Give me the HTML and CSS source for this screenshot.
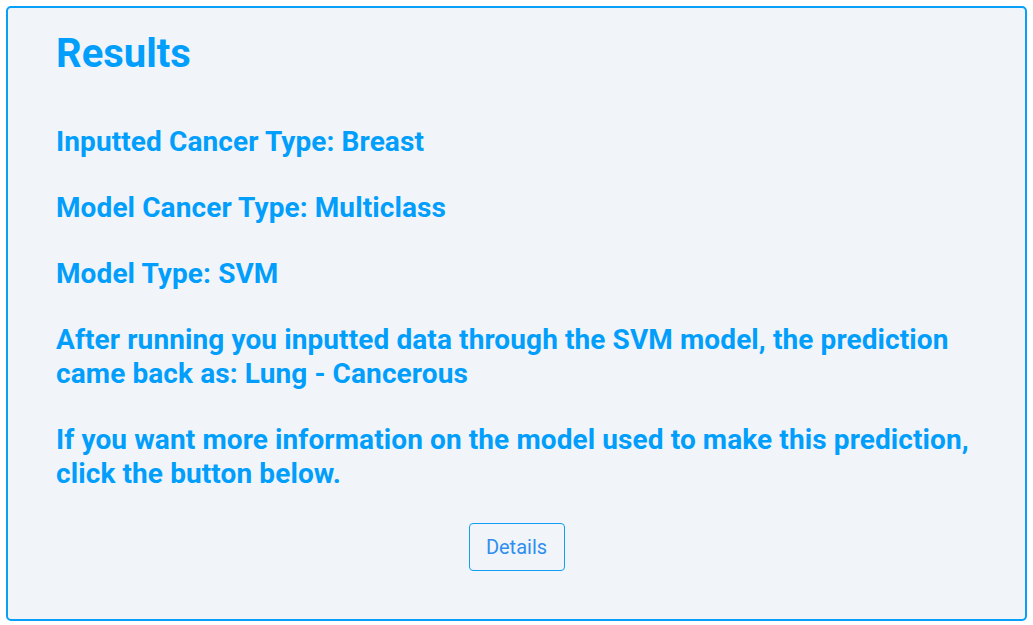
FILE: index.html
```html
<!DOCTYPE html>
<html>
<head>
<meta charset="utf-8">
<link rel="stylesheet" href="styles.css">
</head>
<body>
<div class="card">
  <h1 class="title">Results</h1>
  <p class="line">Inputted Cancer Type: Breast</p>
  <p class="line">Model Cancer Type: Multiclass</p>
  <p class="line">Model Type: SVM</p>
  <p class="line">After running you inputted data through the SVM model, the prediction came back as: Lung - Cancerous</p>
  <p class="line">If you want more information on the model used to make this prediction, click the button below.</p>
  <div class="actions">
    <button class="btn">Details</button>
  </div>
</div>
</body>
</html>
```

FILE: styles.css
```css
html, body {
  margin: 0;
  padding: 0;
  background: #ffffff;
}
body {
  padding: 6px;
  font-family: Roboto, "Liberation Sans", sans-serif;
}
.card {
  box-sizing: border-box;
  width: 1021px;
  height: 615px;
  border: 2px solid #089ff8;
  border-radius: 5px;
  background: #f1f5f9;
  padding: 22px 48px 0 48px;
}
.title {
  margin: 0 0 47px 0;
  font-size: 40px;
  font-weight: 700;
  color: #029efc;
  line-height: 48px;
}
.line {
  margin: 0 0 32px 0;
  font-size: 28px;
  font-weight: 700;
  line-height: 34px;
  letter-spacing: 0.1px;
  color: #029efc;
}
.actions {
  display: flex;
  justify-content: center;
  margin-top: 2px;
}
.btn {
  width: 96px;
  height: 48px;
  border: 1px solid #129ef4;
  border-radius: 4px;
  background: transparent;
  color: #2f8ef0;
  font-family: Roboto, "Liberation Sans", sans-serif;
  font-size: 20px;
  font-weight: 400;
  cursor: pointer;
}
```
